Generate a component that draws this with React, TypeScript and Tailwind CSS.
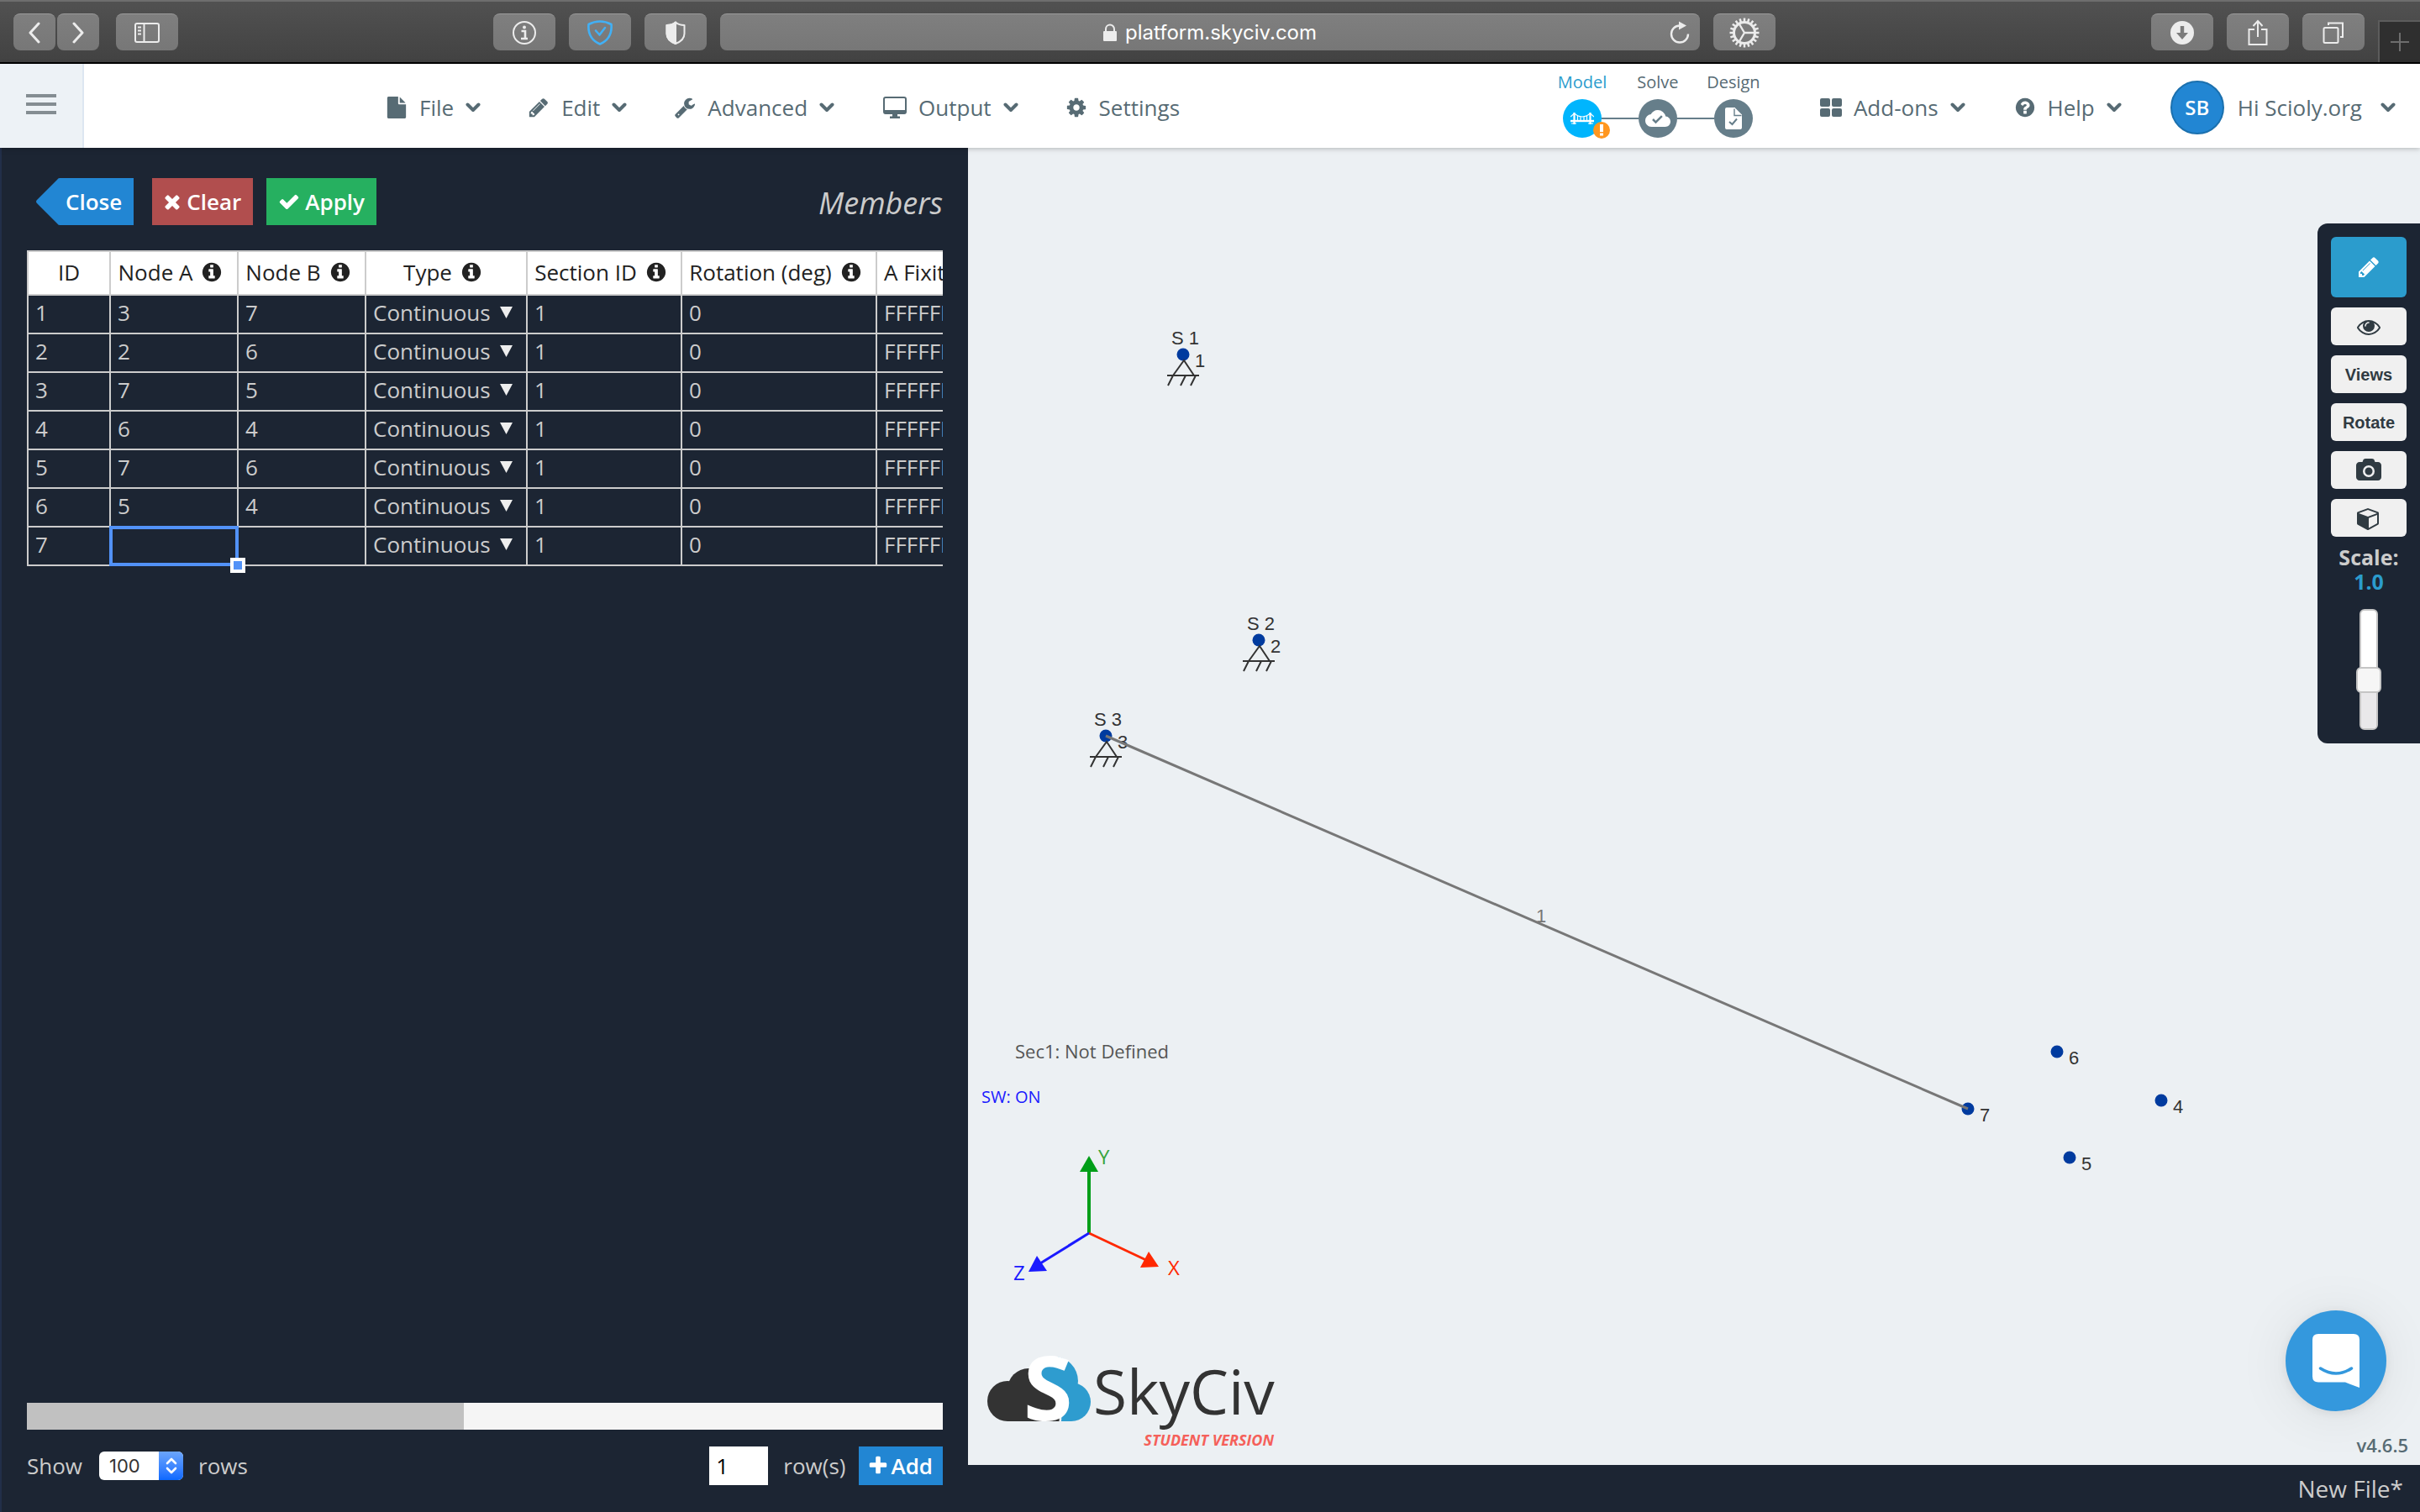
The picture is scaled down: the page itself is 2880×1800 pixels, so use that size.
import React from "react";
import { MdCloudDone } from "react-icons/md";

const PATHS = {
  file: "M1152 512v-472q22 14 36 28l408 408q14 14 28 36h-472zm-128 32q0 40 28 68t68 28h544v1056q0 40-28 68t-68 28h-1344q-40 0-68-28t-28-68v-1600q0-40 28-68t68-28h800v544z",
  pencil:
    "M491 1536l91-91-235-235-91 91v107h128v128h107zm523-928q0-22-22-22-10 0-17 7l-542 542q-7 7-7 17 0 22 22 22 10 0 17-7l542-542q7-7 7-17zm-54-192l416 416-832 832h-416v-416zm683 96q0 53-37 90l-166 166-416-416 166-165q36-38 90-38 53 0 91 38l235 234q37 39 37 91z",
  wrench:
    "M448 1472q0-26-19-45t-45-19-45 19-19 45 19 45 45 19 45-19 19-45zm644-420l-682 682q-37 37-90 37-52 0-91-37l-106-108q-38-36-38-90 0-53 38-91l681-681q39 98 114.5 173.5t173.5 114.5zm634-435q0 39-23 106-47 134-164.5 217.5t-258.5 83.5q-185 0-316.5-131.5t-131.5-316.5 131.5-316.5 316.5-131.5q58 0 121.5 16.5t107.5 46.5q16 11 16 28t-16 28l-293 169v224l193 107q5-3 79-48.5t135.5-81 70.5-35.5q15 0 23.5 10t8.5 25z",
  cog: "M1152 896q0-106-75-181t-181-75-181 75-75 181 75 181 181 75 181-75 75-181zm512-109v222q0 12-8 23t-20 13l-185 28q-19 54-39 91 35 50 107 138 10 12 10 25t-9 23q-27 37-99 108t-94 71q-12 0-26-9l-138-108q-44 23-91 38-16 136-29 186-7 28-36 28h-222q-14 0-24.5-8.5t-11.5-21.5l-28-184q-49-16-90-37l-141 107q-10 9-25 9-14 0-25-11-126-114-165-168-7-10-7-23 0-12 8-23 15-21 51-66.5t54-70.5q-27-50-41-99l-183-27q-13-2-21-12.5t-8-23.5v-222q0-12 8-23t19-13l186-28q14-46 39-92-40-57-107-138-10-12-10-24 0-10 9-23 26-36 98.5-107.5t94.5-71.5q13 0 26 10l138 107q44-23 91-38 16-136 29-186 7-28 36-28h222q14 0 24.5 8.5t11.5 21.5l28 184q49 16 90 37l142-107q9-9 24-9 13 0 25 10 129 119 165 170 7 8 7 22 0 12-8 23-15 21-51 66.5t-54 70.5q26 50 41 98l183 28q13 2 21 12.5t8 23.5z",
  check:
    "M1671 566q0 40-28 68l-724 724-136 136q-28 28-68 28t-68-28l-136-136-362-362q-28-28-28-68t28-68l136-136q28-28 68-28t68 28l294 295 656-657q28-28 68-28t68 28l136 136q28 28 28 68z",
  times:
    "M1490 1322q0 40-28 68l-136 136q-28 28-68 28t-68-28l-294-294-294 294q-28 28-68 28t-68-28l-136-136q-28-28-28-68t28-68l294-294-294-294q-28-28-28-68t28-68l136-136q28-28 68-28t68 28l294 294 294-294q28-28 68-28t68 28l136 136q28 28 28 68t-28 68l-294 294 294 294q28 28 28 68z",
  plus: "M1600 736v192q0 40-28 68t-68 28h-416v416q0 40-28 68t-68 28h-192q-40 0-68-28t-28-68v-416h-416q-40 0-68-28t-28-68v-192q0-40 28-68t68-28h416v-416q0-40 28-68t68-28h192q40 0 68 28t28 68v416h416q40 0 68 28t28 68z",
  info: "M1152 1376v-160q0-14-9-23t-23-9h-96v-512q0-14-9-23t-23-9h-320q-14 0-23 9t-9 23v160q0 14 9 23t23 9h96v320h-96q-14 0-23 9t-9 23v160q0 14 9 23t23 9h448q14 0 23-9t9-23zm-128-896v-160q0-14-9-23t-23-9h-192q-14 0-23 9t-9 23v160q0 14 9 23t23 9h192q14 0 23-9t9-23zm640 416q0 209-103 385.5t-279.5 279.5-385.5 103-385.5-103-279.5-279.5-103-385.5 103-385.5 279.5-279.5 385.5-103 385.5 103 279.5 279.5 103 385.5z",
  question:
    "M1024 1376v-192q0-14-9-23t-23-9h-192q-14 0-23 9t-9 23v192q0 14 9 23t23 9h192q14 0 23-9t9-23zm256-672q0-88-55.5-163t-138.5-116-170-41q-243 0-371 213-15 24 8 42l132 100q7 6 19 6 16 0 25-12 53-68 86-92 34-24 86-24 48 0 85.5 26t37.5 59q0 38-20 61t-68 45q-63 28-115.5 86.5t-52.5 125.5v36q0 14 9 23t23 9h192q14 0 23-9t9-23q0-19 21.5-49.5t54.5-49.5q32-18 49-28.5t46-35 44.5-48 28-60.5 12.5-81zm384 192q0 209-103 385.5t-279.5 279.5-385.5 103-385.5-103-279.5-279.5-103-385.5 103-385.5 279.5-279.5 385.5-103 385.5 103 279.5 279.5 103 385.5z",
  camera:
    "M896 672q119 0 203.5 84.5t84.5 203.5-84.5 203.5-203.5 84.5-203.5-84.5-84.5-203.5 84.5-203.5 203.5-84.5zm704-416q106 0 181 75t75 181v896q0 106-75 181t-181 75h-1408q-106 0-181-75t-75-181v-896q0-106 75-181t181-75h224l51-136q19-49 69.5-84.5t103.5-35.5h512q53 0 103.5 35.5t69.5 84.5l51 136h224zm-704 1152q185 0 316.5-131.5t131.5-316.5-131.5-316.5-316.5-131.5-316.5 131.5-131.5 316.5 131.5 316.5 316.5 131.5z",
  eye: "M1664 960q-152-236-381-353 61 104 61 225 0 185-131.5 316.5t-316.5 131.5-316.5-131.5-131.5-316.5q0-121 61-225-229 117-381 353 133 205 333.5 326.5t434.5 121.5 434.5-121.5 333.5-326.5zm-720-384q0-20-14-34t-34-14q-125 0-214.5 89.5t-89.5 214.5q0 20 14 34t34 14 34-14 14-34q0-86 61-147t147-61q20 0 34-14t14-34zm848 384q0 34-20 69-140 230-376.5 368.5t-499.5 138.5-499.5-139-376.5-368q-20-35-20-69t20-69q140-229 376.5-368t499.5-139 499.5 139 376.5 368q20 35 20 69z",
  cube: "M896 1629l640-349v-636l-640 233v752zm-64-865l698-254-698-254-698 254 698 254zm832-252v768q0 35-18 65t-49 47l-704 384q-28 16-61 16t-61-16l-704-384q-31-17-49-47t-18-65v-768q0-40 23-73t61-47l704-256q22-8 44-8t44 8l704 256q38 14 61 47t23 73z",
};

function Glyph({ name, className }: { name: keyof typeof PATHS; className: string }) {
  return (
    <svg viewBox="0 0 1792 1792" className={className} fill="currentColor" overflow="visible" aria-hidden="true">
      <path d={PATHS[name]} />
    </svg>
  );
}

function Chevron() {
  return (
    <svg viewBox="0 0 18 12" className="h-3 w-[18px]" fill="none" stroke="currentColor" strokeWidth="4" strokeLinecap="round" strokeLinejoin="round" aria-hidden="true">
      <path d="M2.500 2.500L9 9l6.500-6.500" />
    </svg>
  );
}

function DesktopIcon() {
  return (
    <svg viewBox="0 0 28 26" className="ml-0.5 h-[26px] w-7 shrink-0" aria-hidden="true">
      <rect x="1" y="1" width="26" height="19" rx="2" fill="none" stroke="currentColor" strokeWidth="2" />
      <path d="M1 16h26v2.500q0 2-2 2H3q-2 0-2-2zM11 20h6v3.500h3V26H8v-2.500h3z" fill="currentColor" />
    </svg>
  );
}

function TilesIcon() {
  return (
    <svg viewBox="0 0 26 22" className="h-[22px] w-[26px] shrink-0" fill="currentColor" aria-hidden="true">
      <rect x="0" y="0" width="12" height="10" rx="2" />
      <rect x="14" y="0" width="12" height="10" rx="2" />
      <rect x="0" y="12" width="12" height="10" rx="2" />
      <rect x="14" y="12" width="12" height="10" rx="2" />
    </svg>
  );
}

/* ---------- Browser chrome ---------- */

function ChromeButton({ label, className = "w-[74px]", children }: { label: string; className?: string; children: React.ReactNode }) {
  return (
    <button
      aria-label={label}
      className={`${className} flex h-11 shrink-0 items-center justify-center rounded-lg border-t border-[#9a9a9a] bg-linear-to-b from-[#7f7f7f] to-[#777777] text-[#ececec]`}
    >
      {children}
    </button>
  );
}

function GearIcon() {
  const teeth = Array.from({ length: 20 }, (_, i) => i * 18);
  return (
    <svg viewBox="0 0 36 36" className="size-9" stroke="currentColor" fill="none" aria-hidden="true">
      <circle cx="18" cy="18" r="12.500" strokeWidth="3" />
      {teeth.map((a) => (
        <path key={a} d="M18 5V.5" strokeWidth="2.500" transform={`rotate(${a} 18 18)`} />
      ))}
      <path d="M18 18h12M18 18l-6.500-11M18 18l-6.500 11" strokeWidth="2.400" />
    </svg>
  );
}

function BrowserBar() {
  return (
    <div className="flex h-[76px] shrink-0 items-center border-t-2 border-b-2 border-t-[#6e6e6e] border-b-black bg-linear-to-b from-[#515151] to-[#424242]">
      <div className="flex w-[587px] shrink-0 gap-5 pl-4">
        <div className="flex gap-0.5">
          <ChromeButton label="Back" className="w-[50px]">
            <svg viewBox="0 0 14 26" className="h-[26px] w-[14px]" fill="none" stroke="currentColor" strokeWidth="3" strokeLinecap="round" strokeLinejoin="round">
              <path d="M12 2L2 13l10 11" />
            </svg>
          </ChromeButton>
          <ChromeButton label="Forward" className="w-[50px]">
            <svg viewBox="0 0 14 26" className="h-[26px] w-[14px]" fill="none" stroke="currentColor" strokeWidth="3" strokeLinecap="round" strokeLinejoin="round">
              <path d="M2 2l10 11L2 24" />
            </svg>
          </ChromeButton>
        </div>
        <ChromeButton label="Show sidebar">
          <svg viewBox="0 0 30 24" className="h-6 w-[30px]" fill="none" stroke="currentColor" strokeWidth="2">
            <rect x="1" y="1" width="28" height="22" rx="2" />
            <path d="M11.500 1v22M4 5.500h4M4 9.500h4M4 13.500h4" />
          </svg>
        </ChromeButton>
      </div>
      <div className="flex min-w-0 flex-1 gap-4">
        <ChromeButton label="Page info">
          <svg viewBox="0 0 28 28" className="size-7" fill="none" stroke="currentColor" strokeWidth="2">
            <circle cx="14" cy="14" r="13" />
            <circle cx="14" cy="7.500" r="2" fill="currentColor" stroke="none" />
            <path d="M10.500 12H15v8.500M10 21h8" strokeWidth="2.600" />
          </svg>
        </ChromeButton>
        <ChromeButton label="Site protection">
          <svg viewBox="0 0 32 30" className="h-[30px] w-8 text-[#42b0f5]" fill="none" stroke="currentColor" strokeWidth="2.600" strokeLinejoin="round" strokeLinecap="round">
            <path d="M16 1.500Q9 1.500 2.500 5Q1 22 16 28.500Q31 22 29.500 5Q23 1.500 16 1.500z" />
            <path d="M11 12.500l4.500 5L22 9" />
          </svg>
        </ChromeButton>
        <ChromeButton label="Privacy report">
          <svg viewBox="0 0 24 28" className="h-7 w-6" fill="none" stroke="currentColor" strokeWidth="2" strokeLinejoin="round">
            <path d="M12 1.500Q8 5 1.500 5V15Q1.500 23 12 27Q22.500 23 22.500 15V5Q16 5 12 1.500z" />
            <path d="M12 1.500Q8 5 1.500 5V15Q1.500 23 12 27z" fill="currentColor" />
          </svg>
        </ChromeButton>
        <div className="flex h-11 min-w-0 flex-1 items-center rounded-lg border-t border-[#9a9a9a] bg-linear-to-b from-[#7f7f7f] to-[#777777] pr-3 pl-9">
          <div className="flex flex-1 items-center justify-center gap-2.5">
            <svg viewBox="0 0 16 22" className="h-[22px] w-4 text-[#ececec]" aria-hidden="true">
              <rect x="0" y="9" width="16" height="12" rx="1" fill="currentColor" />
              <path d="M3 10V6.500a5 5 0 0110 0V10" fill="none" stroke="currentColor" strokeWidth="2" />
            </svg>
            <span className="font-['Inter','Liberation_Sans',sans-serif] text-2xl text-white">platform.skyciv.com</span>
          </div>
          <button aria-label="Reload" className="text-[#ececec]">
            <svg viewBox="0 0 24 28" className="h-7 w-6" fill="none" stroke="currentColor" strokeWidth="2.400">
              <path d="M22 15.500a10 10 0 11-10-10" />
              <path d="M11 .5l9 5-9 5z" fill="currentColor" stroke="none" />
            </svg>
          </button>
        </div>
        <ChromeButton label="Extension settings">
          <GearIcon />
        </ChromeButton>
      </div>
      <div className="flex w-[767px] shrink-0 justify-end gap-4 self-stretch">
        <div className="flex items-center gap-4">
          <ChromeButton label="Downloads">
            <svg viewBox="0 0 28 28" className="size-7">
              <circle cx="14" cy="14" r="14" fill="currentColor" />
              <path d="M11.800 6h4.400v8h4.800L14 22l-7-8h4.800z" fill="#7b7b7b" />
            </svg>
          </ChromeButton>
          <ChromeButton label="Share">
            <svg viewBox="0 0 24 32" className="h-8 w-6" fill="none" stroke="currentColor" strokeWidth="2">
              <path d="M8 12H1.500v18h21V12H16M12 21V3M6.500 8L12 2l5.500 6" />
            </svg>
          </ChromeButton>
          <ChromeButton label="Show all tabs">
            <svg viewBox="0 0 26 26" className="size-[26px]" fill="none" stroke="currentColor" strokeWidth="2">
              <rect x="1.500" y="7" width="17" height="18" rx="1.500" />
              <path d="M7 4V1.500h17V18h-3" />
            </svg>
          </ChromeButton>
        </div>
        <button aria-label="New tab" className="mt-[22px] flex w-[50px] items-center justify-center border-t-2 border-l-2 border-[#5c5c5c] bg-[#2f2f2f] text-[#6e6e6e]">
          <svg viewBox="0 0 22 22" className="size-[22px]" stroke="currentColor" strokeWidth="2">
            <path d="M11 0v22M0 11h22" />
          </svg>
        </button>
      </div>
    </div>
  );
}

/* ---------- Application header ---------- */

function MenuItem({ icon, label, caret = true }: { icon: React.ReactNode; label: string; caret?: boolean }) {
  return (
    <button className="flex items-center gap-3.5 text-[26px] leading-9 whitespace-nowrap text-[#576b74]">
      {icon}
      {label}
      {caret && <Chevron />}
    </button>
  );
}

function Step({ label, active = false, first = false, last = false, children }: { label: string; active?: boolean; first?: boolean; last?: boolean; children: React.ReactNode }) {
  return (
    <button className="flex w-[90px] flex-col items-center">
      <span className={`${active ? "text-[#2b9ccd]" : "text-[#576b74]"} text-xl leading-7`}>{label}</span>
      <span className="mt-1.5 flex w-full items-center">
        <span className={`${first ? "bg-transparent" : "bg-[#667e8a]"} h-0.5 flex-1`} />
        <span className={`${active ? "bg-[#00b5fd]" : "bg-[#667e8a]"} relative flex size-[46px] items-center justify-center rounded-full text-white`}>{children}</span>
        <span className={`${last ? "bg-transparent" : "bg-[#667e8a]"} h-0.5 flex-1`} />
      </span>
    </button>
  );
}

function AppHeader() {
  return (
    <header className="relative z-10 flex h-[100px] shrink-0 items-center bg-white shadow-[0_1px_6px_rgba(0,0,0,0.25)]">
      <button aria-label="Open navigation" className="flex h-full w-[100px] shrink-0 flex-col items-center justify-center gap-1.5 border-r-2 border-[#dce6f1] bg-[#edf2f6] pb-1">
        <span className="h-1 w-9 bg-[#848d92]" />
        <span className="h-1 w-9 bg-[#848d92]" />
        <span className="h-1 w-9 bg-[#848d92]" />
      </button>
      <nav className="ml-[359px] flex items-center gap-14 pt-1">
        <MenuItem icon={<Glyph name="file" className="size-[26px]" />} label="File" />
        <MenuItem icon={<Glyph name="pencil" className="size-[26px]" />} label="Edit" />
        <MenuItem icon={<Glyph name="wrench" className="size-[26px]" />} label="Advanced" />
        <MenuItem icon={<DesktopIcon />} label="Output" />
        <MenuItem icon={<Glyph name="cog" className="size-[26px]" />} label="Settings" caret={false} />
      </nav>
      <div className="ml-auto flex items-center gap-[58px] pt-1 pr-[29px]">
        <div className="flex pb-2">
          <Step label="Model" active first>
            <svg viewBox="0 0 28 16" className="h-4 w-7" fill="none" stroke="currentColor" aria-hidden="true">
              <path d="M0 11h28" strokeWidth="2.400" />
              <path d="M4.500 1v14M23.500 1v14" strokeWidth="2.200" />
              <path d="M0 6L4.500 2Q14 10 23.500 2L28 6M1 14h6M21 14h6" strokeWidth="1.200" />
              <path d="M8.500 5v5M12 6.500V10M16 6.500V10M19.500 5v5" strokeWidth="1.200" />
            </svg>
            <span className="absolute top-[27px] left-9 flex size-5 items-center justify-center rounded-full bg-[#ff9720]">
              <svg viewBox="0 0 4 14" className="h-3.5 w-1" fill="white" aria-hidden="true">
                <rect width="4" height="9" />
                <rect y="10.500" width="4" height="3" />
              </svg>
            </span>
          </Step>
          <Step label="Solve">
            <MdCloudDone className="size-[30px]" />
          </Step>
          <Step label="Design" last>
            <svg viewBox="0 0 20 26" className="h-[26px] w-5" aria-hidden="true">
              <path d="M2 0h10v8h8v16q0 2-2 2H2q-2 0-2-2V2Q0 0 2 0zM11.500 0L20 8.500V9h-8.500z" fill="white" />
              <path d="M11 1.500V9.500h8.500" fill="none" stroke="#667e8a" strokeWidth="1.400" />
              <path d="M5 17l3.500 3 5.500-6.500" fill="none" stroke="#667e8a" strokeWidth="2" />
            </svg>
          </Step>
        </div>
        <MenuItem icon={<TilesIcon />} label="Add-ons" />
        <MenuItem icon={<Glyph name="question" className="size-[26px]" />} label="Help" />
        <button className="flex items-center gap-4 text-[26px] leading-9 whitespace-nowrap text-[#576b74]">
          <span className="flex size-16 items-center justify-center rounded-full border-2 border-[#1b70ae] bg-[#2286d3] text-2xl font-semibold text-white">SB</span>
          Hi Scioly.org
          <span className="ml-1.5">
            <Chevron />
          </span>
        </button>
      </div>
    </header>
  );
}

/* ---------- Members panel ---------- */

const COLUMNS = [
  { title: "ID", info: false },
  { title: "Node A", info: true },
  { title: "Node B", info: true },
  { title: "Type", info: true },
  { title: "Section ID", info: true },
  { title: "Rotation (deg)", info: true },
  { title: "A Fixity", info: true },
];

const MEMBERS = [
  ["1", "3", "7"],
  ["2", "2", "6"],
  ["3", "7", "5"],
  ["4", "6", "4"],
  ["5", "7", "6"],
  ["6", "5", "4"],
  ["7", "", ""],
];

function MembersTable() {
  const cell = "h-[46px] border-r-2 border-b-2 border-[#cccccc] px-2 pb-1";
  return (
    <div id="members" className="overflow-hidden pb-3">
      <table className="w-[1220px] table-fixed border-separate border-spacing-0 border-t-2 border-l-2 border-[#cccccc] text-[26px] leading-10 text-[#cccccc]">
        <colgroup>
          <col className="w-[98px]" />
          <col className="w-[152px]" />
          <col className="w-[152px]" />
          <col className="w-[192px]" />
          <col className="w-[184px]" />
          <col className="w-[232px]" />
          <col />
        </colgroup>
        <thead>
          <tr>
            {COLUMNS.map((c, i) => (
              <th key={c.title} className="h-[52px] border-r-2 border-b-2 border-[#cccccc] bg-white px-0 pt-0 pb-0.5 font-normal whitespace-nowrap text-[#222222]">
                <span className={`${i === 6 ? "justify-start pl-2" : "justify-center"} flex items-center gap-2.5`}>
                  {c.title}
                  {c.info && <Glyph name="info" className="mr-2 size-[26px]" />}
                </span>
              </th>
            ))}
          </tr>
        </thead>
        <tbody>
          {MEMBERS.map(([id, a, b]) => (
            <tr key={id}>
              <td className={cell}>{id}</td>
              <td className={`${cell} relative`}>
                {a}
                {a === "" && (
                  <span className="absolute -inset-0.5 z-10 border-4 border-[#5292f7]">
                    <span className="absolute -right-3 -bottom-3 size-[18px] border-4 border-white bg-[#5292f7]" />
                  </span>
                )}
              </td>
              <td className={cell}>{b}</td>
              <td className={cell}>
                <span className="flex items-center justify-between">
                  Continuous
                  <button aria-label={`Type of member ${id}`} className="mr-2 text-[#eeeeee]">
                    <svg viewBox="0 0 15 14" className="h-3.5 w-[15px]" fill="currentColor">
                      <path d="M0 0h15L7.500 14z" />
                    </svg>
                  </button>
                </span>
              </td>
              <td className={cell}>1</td>
              <td className={cell}>0</td>
              <td className={cell}>FFFFFF</td>
            </tr>
          ))}
        </tbody>
      </table>
    </div>
  );
}

function MembersPanel() {
  return (
    <section className="flex w-2/5 shrink-0 flex-col border-l-2 border-[#222f49] bg-[#1c2533] px-[30px] pt-9 pb-8 text-[26px] text-[#cccccc]">
      <div className="flex h-14 items-center pl-[11px]">
        <button className="flex h-14 items-center font-semibold text-white">
          <svg viewBox="0 0 29 56" className="h-14 w-[29px]" aria-hidden="true">
            <path d="M29 0h-1Q26 0 25 2L1 26Q-1 28 1 30l24 24q1 2 3 2h1z" fill="#2286d3" />
          </svg>
          <span className="flex h-14 items-center bg-[#2286d3] pr-3.5 pl-1.5">Close</span>
        </button>
        <button className="ml-5.5 flex h-14 items-center gap-1 bg-[#b14e4e] pr-3.5 pl-[11px] font-semibold text-white">
          <Glyph name="times" className="size-[26px]" />
          Clear
        </button>
        <button className="ml-4 flex h-14 items-center gap-1.5 bg-[#26b060] px-3.5 font-semibold text-white">
          <Glyph name="check" className="size-[26px]" />
          Apply
        </button>
        <h1 className="ml-auto pt-1 text-4xl text-[#cccccc] italic">Members</h1>
      </div>
      <div className="mt-[30px]">
        <MembersTable />
      </div>
      <div role="scrollbar" aria-controls="members" aria-valuenow={0} aria-orientation="horizontal" className="mt-auto h-8 bg-[#f5f5f5]">
        <div className="h-full w-[520px] bg-[#c1c1c1]" />
      </div>
      <div className="mt-5 flex h-[46px] items-center">
        <label htmlFor="page-size">Show</label>
        <span className="relative ml-5 flex h-[34px] w-[100px] overflow-hidden rounded-md bg-white">
          <select id="page-size" defaultValue="100" className="w-full appearance-none pl-3 font-['Inter','Liberation_Sans',sans-serif] text-[22px] text-[#333333]">
            <option>100</option>
          </select>
          <span className="pointer-events-none absolute inset-y-0 right-0 flex w-[29px] items-center justify-center bg-linear-to-b from-[#6ba5fb] to-[#0a68ff]">
            <svg viewBox="0 0 14 20" className="h-5 w-3.5" fill="none" stroke="white" strokeWidth="2.600" strokeLinecap="round" strokeLinejoin="round" aria-hidden="true">
              <path d="M2 7l5-5 5 5M2 13l5 5 5-5" />
            </svg>
          </span>
        </span>
        <span className="ml-[18px]">rows</span>
        <input id="row-count" defaultValue="1" className="ml-auto h-[46px] w-[70px] bg-white pl-2 text-[26px] text-black" />
        <label htmlFor="row-count" className="ml-[18px]">
          row(s)
        </label>
        <button className="ml-4 flex h-[46px] items-center gap-0.5 bg-[#2286d3] pr-3 pl-2.5 font-semibold text-white">
          <Glyph name="plus" className="size-[26px]" />
          Add
        </button>
      </div>
    </section>
  );
}

/* ---------- Model canvas ---------- */

const NODES = [
  { id: 1, x: 256, y: 246, support: true },
  { id: 2, x: 346, y: 586, support: true },
  { id: 3, x: 164, y: 700, support: true },
  { id: 4, x: 1420, y: 1134, support: false },
  { id: 5, x: 1311, y: 1202, support: false },
  { id: 6, x: 1296, y: 1076, support: false },
  { id: 7, x: 1190, y: 1144, support: false },
];

function ModelDrawing() {
  return (
    <svg viewBox="0 0 1728 1568" className="absolute top-0 left-0 h-[1568px] w-[1728px] font-['Liberation_Sans',Arial,sans-serif] text-[22px]" role="img" aria-label="Structural model">
      {NODES.map((n) => (
        <g key={n.id}>
          <circle cx={n.x} cy={n.y} r="7.500" fill="#003b9f" />
          {n.support && (
            <g stroke="#333333" strokeWidth="2" fill="none">
              <path d={`M${n.x - 12} ${n.y + 25}l13-18 12 18M${n.x - 19} ${n.y + 25}h38`} />
              <path d={`M${n.x - 12} ${n.y + 25}l-6 12M${n.x + 3} ${n.y + 25}l-6 12M${n.x + 15} ${n.y + 25}l-6 12`} />
            </g>
          )}
          {n.support && (
            <text x={n.x - 14} y={n.y - 12} fill="#333333">{`S ${n.id}`}</text>
          )}
          <text x={n.x + 14} y={n.y + 15} fill="#333333">
            {n.id}
          </text>
        </g>
      ))}
      <path d="M164 700L1190 1144" stroke="#777777" strokeWidth="3" />
      <text x="676" y="922" fill="#777777">
        1
      </text>
    </svg>
  );
}

function Axes() {
  return (
    <svg viewBox="0 0 220 170" className="h-[170px] w-[220px] font-['Open_Sans',sans-serif] text-2xl" role="img" aria-label="Axes">
      <path d="M96 108V30" stroke="#009e18" strokeWidth="4" />
      <path d="M96 16l11 19H85z" fill="#009e18" />
      <path d="M96 108l70 33" stroke="#ff2800" strokeWidth="3" />
      <path d="M167 130l12 18-22 1z" fill="#ff2800" />
      <path d="M96 108l-58 36" stroke="#1a1aff" strokeWidth="3" />
      <path d="M34 135l12 18-22 1z" fill="#1a1aff" />
      <text x="107" y="26" fill="#3aa53f">
        Y
      </text>
      <text x="190" y="158" fill="#ff2800">
        X
      </text>
      <text x="6" y="164" fill="#1a1aff">
        Z
      </text>
    </svg>
  );
}

function Logo() {
  return (
    <svg viewBox="0 0 350 126" className="h-[126px] w-[350px] font-['Open_Sans',sans-serif]" role="img" aria-label="SkyCiv Student Version">
      <defs>
        <clipPath id="cloud-left">
          <path d="M0 0h56v36l16 14 16 14-4 60H0z" />
        </clipPath>
        <clipPath id="cloud-right">
          <path d="M60 0v34l14 16 18 14-8 60h70V0z" />
        </clipPath>
      </defs>
      <g clipPath="url(#cloud-left)" fill="#333333">
        <circle cx="25" cy="63" r="24" />
        <circle cx="50" cy="49" r="25" />
        <rect x="25" y="44" width="75" height="43" />
      </g>
      <g clipPath="url(#cloud-right)" fill="#2e9ccf">
        <circle cx="80" cy="39" r="29" />
        <circle cx="101" cy="64" r="23" />
        <rect x="60" y="40" width="41" height="47" />
      </g>
      <text x="44" y="86" fill="white" className="text-[106px] font-bold">
        S
      </text>
      <text x="127" y="79" fill="#333333" className="text-[73px]">
        SkyCiv
      </text>
      <text x="342" y="116" textAnchor="end" fill="#f5605a" className="text-[18px] font-bold italic">
        STUDENT VERSION
      </text>
    </svg>
  );
}

function ViewButton({ label, children }: { label: string; children: React.ReactNode }) {
  return (
    <button aria-label={label} className="flex h-[45px] w-[90px] items-center justify-center rounded-md bg-[#f0f0f0] font-['Liberation_Sans',Arial,sans-serif] text-xl font-bold text-[#303b42]">
      {children}
    </button>
  );
}

function ViewToolbar() {
  return (
    <div className="absolute top-[90px] right-0 flex w-[122px] flex-col items-center gap-3 rounded-l-xl bg-[#1c2533] py-4">
      <button aria-label="Draw" className="flex h-[72px] w-[90px] items-center justify-center rounded-md bg-[#2b9ccd] text-white">
        <Glyph name="pencil" className="size-7" />
      </button>
      <ViewButton label="Visibility">
        <Glyph name="eye" className="size-7" />
      </ViewButton>
      <ViewButton label="Views">Views</ViewButton>
      <ViewButton label="Rotate">Rotate</ViewButton>
      <ViewButton label="Screenshot">
        <Glyph name="camera" className="size-7" />
      </ViewButton>
      <ViewButton label="3D render">
        <Glyph name="cube" className="size-7" />
      </ViewButton>
      <label htmlFor="scale" className="-mt-0.5 flex flex-col items-center text-[25px] leading-[29px] font-bold text-[#cccccc]">
        Scale:
        <span className="text-[#2b9ccd]">1.0</span>
      </label>
      <div className="relative mt-1.5 flex h-36 w-[30px] justify-center">
        <span className="flex w-[22px] flex-col justify-end overflow-hidden rounded-md border-2 border-[#c5c5c5] bg-white">
          <span className="h-1/2 bg-[#e9e8ea]" />
        </span>
        <span className="absolute top-[69px] left-0 h-[31px] w-[30px] rounded-md border-2 border-[#c5c5c5] bg-[#f6f6f6]" />
        <input id="scale" type="range" min="0" max="3" step="0.1" defaultValue="1" className="absolute inset-0 h-full w-full opacity-0 [direction:rtl] [writing-mode:vertical-lr]" />
      </div>
    </div>
  );
}

function ModelCanvas() {
  return (
    <main className="relative flex min-w-0 flex-1 items-end justify-between overflow-hidden bg-[#ecf0f3]">
      <ModelDrawing />
      <div className="relative flex flex-col">
        <p className="pl-14 text-[22px] leading-[30px] text-[#555555]">Sec1: Not Defined</p>
        <p className="mt-[26px] pl-4 text-xl leading-7 text-[#1a1aff]">SW: ON</p>
        <div className="mt-10 pl-12">
          <Axes />
        </div>
        <div className="mt-[75px] mb-[13px] pl-[22px]">
          <Logo />
        </div>
      </div>
      <ViewToolbar />
      <div className="relative flex flex-col items-end">
        <button aria-label="Open chat" className="mr-10 flex size-[120px] items-center justify-center rounded-full bg-[#3498dd] shadow-[0_2px_12px_rgba(0,0,0,0.08),0_4px_64px_rgba(0,0,0,0.08)]">
          <svg viewBox="0 0 56 64" className="h-16 w-14" aria-hidden="true">
            <path d="M7 0h42q7 0 7 7v57l-17-6.500H7q-7 0-7-7V7Q0 0 7 0z" fill="white" />
            <path d="M9.500 41Q28 53 46.500 41" fill="none" stroke="#3498dd" strokeWidth="3.500" strokeLinecap="round" />
          </svg>
        </button>
        <p className="mt-[26px] mr-3.5 mb-2.5 text-[22px] leading-7 font-semibold text-[#576b74]">v4.6.5</p>
      </div>
    </main>
  );
}

export default function App() {
  return (
    <div className="flex min-h-screen flex-col bg-[#1c2533] font-['Open_Sans','Noto_Sans',sans-serif]">
      <BrowserBar />
      <AppHeader />
      <div className="flex flex-1">
        <MembersPanel />
        <div className="flex min-w-0 flex-1 flex-col">
          <ModelCanvas />
          <footer className="flex h-14 shrink-0 items-center justify-end bg-[#1c2533] pr-5 text-[28px] text-[#cccccc]">New File*</footer>
        </div>
      </div>
    </div>
  );
}
